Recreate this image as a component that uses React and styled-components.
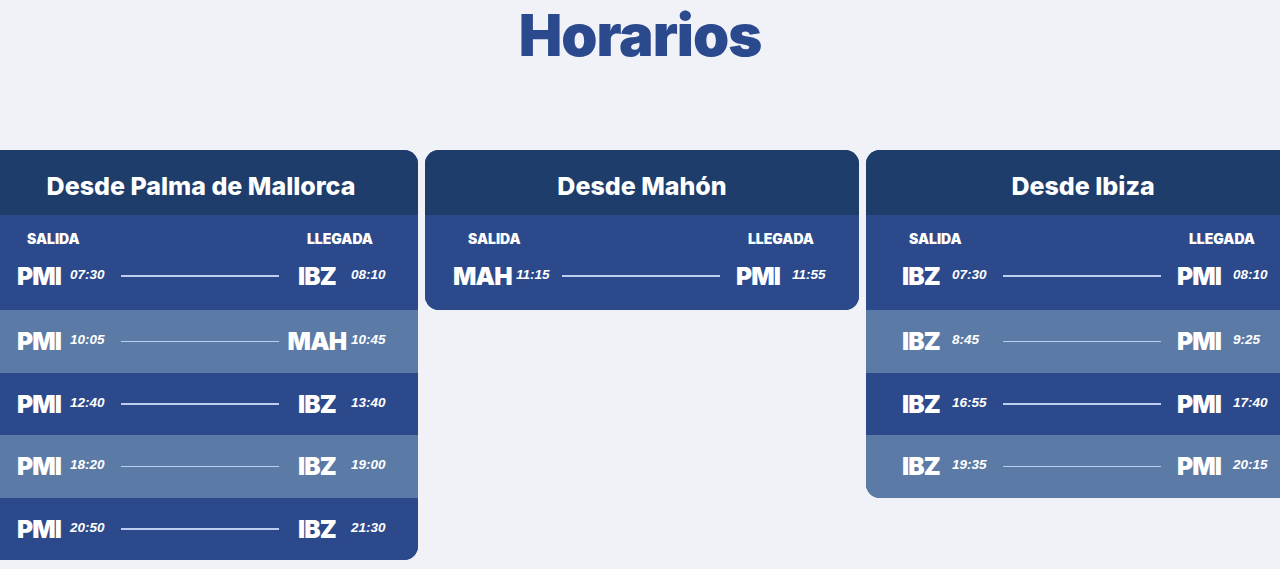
import styled, { createGlobalStyle } from "styled-components";

const GlobalStyle = createGlobalStyle`
  body {
    margin: 0;
    background-color: #f1f2f8;
    font-family: "Inter", "Liberation Sans", sans-serif;
    overflow: hidden;
  }
`;

const Page = styled.div`
  width: 1280px;
  height: 569px;
  overflow: hidden;
`;

const Title = styled.h1`
  margin: 0;
  height: 150px;
  text-align: center;
  font-family: "Inter", sans-serif;
  font-weight: 900;
  font-size: 58px;
  line-height: 70px;
  letter-spacing: -1px;
  color: #2b4a8e;
`;

const Cards = styled.div`
  display: flex;
  justify-content: center;
  align-items: flex-start;
  gap: 7px;
  margin-left: 4px;
`;

const Card = styled.div`
  flex: 0 0 434px;
  border-radius: 14px;
  overflow: hidden;
  background-color: #2c4a8b;
`;

const CardHeader = styled.div`
  height: 65px;
  display: flex;
  align-items: center;
  justify-content: center;
  padding-top: 7px;
  box-sizing: border-box;
  background-color: #1e3d6b;
  color: #ffffff;
  font-family: "Inter", sans-serif;
  font-weight: 800;
  font-size: 25px;
`;

const Section = styled.div`
  background-color: ${(p) => (p.$light ? "#5b7ba6" : "#2c4a8b")};
  padding-top: ${(p) => (p.$first ? "14px" : "0")};
  padding-bottom: ${(p) => (p.$first ? "5px" : "0")};
`;

const Labels = styled.div`
  display: flex;
  justify-content: space-between;
  height: 18px;
  align-items: center;
  padding: 0 45px 0 43px;
  color: #ffffff;
  font-family: "Inter", sans-serif;
  font-weight: 900;
  font-size: 14px;
`;

const Row = styled.div`
  display: grid;
  grid-template-columns: minmax(54px, max-content) 1fr 158px 70px 45px;
  width: 410px;
  box-sizing: border-box;
  align-items: center;
  height: ${(p) => (p.$first ? "58px" : "62.5px")};
  padding-left: 28px;
  color: #ffffff;
`;

const Code = styled.span`
  text-align: center;
  font-family: "Inter", sans-serif;
  font-weight: 900;
  font-size: 24.5px;
  letter-spacing: -0.8px;
  padding-left: ${(p) => (p.$right ? "6px" : "0")};
`;

const Time = styled.span`
  padding-left: ${(p) => (p.$right ? "2px" : "4px")};
  font-family: "Liberation Sans", Arial, sans-serif;
  font-style: italic;
  font-weight: 700;
  font-size: 13.5px;
  margin-top: -3px;
`;

const Line = styled.span`
  display: block;
  height: 1.5px;
  background-color: #bccff0;
`;

const cards = [
  {
    title: "Desde Palma de Mallorca",
    flights: [
      ["PMI", "07:30", "IBZ", "08:10"],
      ["PMI", "10:05", "MAH", "10:45"],
      ["PMI", "12:40", "IBZ", "13:40"],
      ["PMI", "18:20", "IBZ", "19:00"],
      ["PMI", "20:50", "IBZ", "21:30"],
    ],
  },
  {
    title: "Desde Mahón",
    flights: [["MAH", "11:15", "PMI", "11:55"]],
  },
  {
    title: "Desde Ibiza",
    flights: [
      ["IBZ", "07:30", "PMI", "08:10"],
      ["IBZ", "8:45", "PMI", "9:25"],
      ["IBZ", "16:55", "PMI", "17:40"],
      ["IBZ", "19:35", "PMI", "20:15"],
    ],
  },
];

const Flight = ({ flight, first }) => (
  <Row $first={first}>
    <Code>{flight[0]}</Code>
    <Time>{flight[1]}</Time>
    <Line />
    <Code $right>{flight[2]}</Code>
    <Time $right>{flight[3]}</Time>
  </Row>
);

export default function App() {
  return (
    <Page>
      <GlobalStyle />
      <Title>Horarios</Title>
      <Cards>
        {cards.map((card) => (
          <Card key={card.title}>
            <CardHeader>{card.title}</CardHeader>
            {card.flights.map((flight, i) => (
              <Section key={i} $first={i === 0} $light={i % 2 === 1}>
                {i === 0 && (
                  <Labels>
                    <span>SALIDA</span>
                    <span>LLEGADA</span>
                  </Labels>
                )}
                <Flight flight={flight} first={i === 0} />
              </Section>
            ))}
          </Card>
        ))}
      </Cards>
    </Page>
  );
}
